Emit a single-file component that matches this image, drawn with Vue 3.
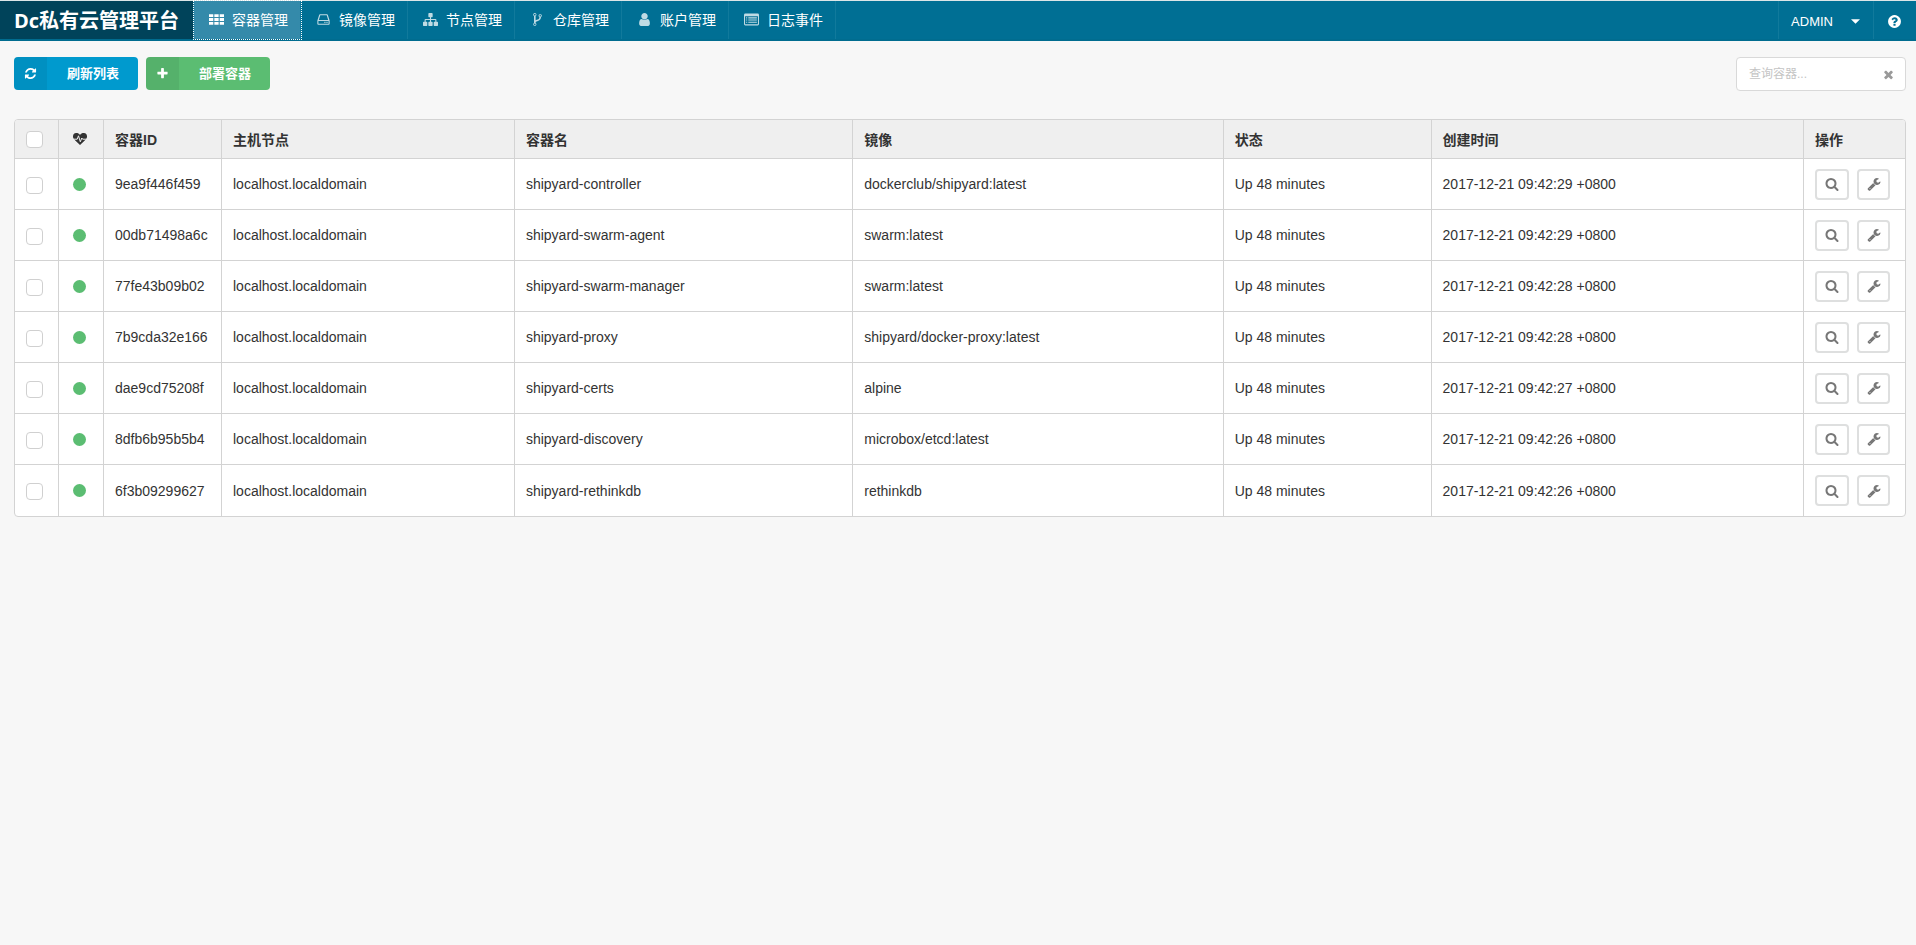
<script setup>
import { ref, computed } from 'vue'

const icons = {
  th: 'M0 256h512v352H0zM640 256h512v352H640zM1280 256h512v352H1280zM0 720h512v352H0zM640 720h512v352H640zM1280 720h512v352H1280zM0 1184h512v352H0zM640 1184h512v352H640zM1280 1184h512v352H1280z',
  disk: 'M480 256h832q70 0 96 70l200 640q24 60 24 110v340q0 120-110 120H270q-110 0-110-120v-340q0-50 24-110l200-640q26-70 96-70zM510 384L340 950h1112L1282 384zM288 1078v330h1216v-330zM1000 1160h130v160h-130zM1250 1160h130v160h-130z',
  sitemap: 'M1792 1248v320q0 40-28 68t-68 28h-320q-40 0-68-28t-28-68v-320q0-40 28-68t68-28h96v-192h-512v192h96q40 0 68 28t28 68v320q0 40-28 68t-68 28h-320q-40 0-68-28t-28-68v-320q0-40 28-68t68-28h96v-192h-512v192h96q40 0 68 28t28 68v320q0 40-28 68t-68 28h-320q-40 0-68-28t-28-68v-320q0-40 28-68t68-28h96v-192q0-52 38-90t90-38h512v-192h-96q-40 0-68-28t-28-68v-320q0-40 28-68t68-28h320q40 0 68 28t28 68v320q0 40-28 68t-68 28h-96v192h512q52 0 90 38t38 90v192h96q40 0 68 28t28 68z',
  fork: 'M672 1472q0-40-28-68t-68-28-68 28-28 68 28 68 68 28 68-28 28-68zm0-1152q0-40-28-68t-68-28-68 28-28 68 28 68 68 28 68-28 28-68zm640 128q0-40-28-68t-68-28-68 28-28 68 28 68 68 28 68-28 28-68zm96 0q0 52-26 96.5t-70 69.5q-2 287-226 414-67 38-203 81-128 40-169.5 71t-41.5 100v26q44 25 70 69.5t26 96.5q0 80-56 136t-136 56-136-56-56-136q0-52 26-96.5t70-69.5v-820q-44-25-70-69.5t-26-96.5q0-80 56-136t136-56 136 56 56 136q0 52-26 96.5t-70 69.5v497q54-26 154-57 55-17 87.5-29.5t70.5-31 59-39.5 40.5-51 28-69.5 8.5-91.5q-44-25-70-69.5t-26-96.5q0-80 56-136t136-56 136 56 56 136z',
  user: 'M1536 1399q0 109-62.5 187t-150.5 78h-854q-88 0-150.5-78t-62.5-187q0-85 8.5-160.5t31.5-152 58.5-131 94-89 134.5-34.5q131 128 313 128t313-128q76 0 134.5 34.5t94 89 58.5 131 31.5 152 8.5 160.5zm-256-887q0 159-112.5 271.5t-271.5 112.5-271.5-112.5-112.5-271.5 112.5-271.5 271.5-112.5 271.5 112.5 112.5 271.5z',
  list: 'M160 192h1472q160 0 160 160v1088q0 160-160 160H160Q0 1600 0 1440V352q0-160 160-160zM128 512v928q0 32 32 32h1472q32 0 32-32V512zM256 640h128v128H256zM512 640h1024v128H512zM256 896h128v128H256zM512 896h1024v128H512zM256 1152h128v128H256zM512 1152h1024v128H512z',
  refresh: 'M1639 1056q0 5-1 7-64 268-268 434.5t-478 166.5q-146 0-282.5-55t-243.5-157l-129 129q-19 19-45 19t-45-19-19-45v-448q0-26 19-45t45-19h448q26 0 45 19t19 45-19 45l-137 137q71 66 161 102t187 36q134 0 250-65t186-179q11-17 53-117 8-23 30-23h192q13 0 22.5 9.5t9.5 22.5zm25-800v448q0 26-19 45t-45 19h-448q-26 0-45-19t-19-45 19-45l138-138q-148-137-349-137-134 0-250 65t-186 179q-11 17-53 117-8 23-30 23h-199q-13 0-22.5-9.5t-9.5-22.5v-7q65-268 270-434.5t480-166.5q146 0 284 55.5t245 156.5l130-129q19-19 45-19t45 19 19 45z',
  plus: 'M1600 736v192q0 40-28 68t-68 28h-416v416q0 40-28 68t-68 28h-192q-40 0-68-28t-28-68v-416h-416q-40 0-68-28t-28-68v-192q0-40 28-68t68-28h416v-416q0-40 28-68t68-28h192q40 0 68 28t28 68v416h416q40 0 68 28t28 68z',
  search: 'M1216 832q0-185-131.5-316.5t-316.5-131.5-316.5 131.5-131.5 316.5 131.5 316.5 316.5 131.5 316.5-131.5 131.5-316.5zm512 832q0 52-38 90t-90 38q-54 0-90-38l-343-342q-179 124-399 124-143 0-273.5-55.5t-225-150-150-225-55.5-273.5 55.5-273.5 150-225 225-150 273.5-55.5 273.5 55.5 225 150 150 225 55.5 273.5q0 220-124 399l343 343q37 37 37 90z',
  wrench: 'M448 1472q0-26-19-45t-45-19-45 19-19 45 19 45 45 19 45-19 19-45zm644-420l-682 682q-37 37-90 37-52 0-91-37l-106-108q-38-36-38-90 0-53 38-91l681-681q39 98 114.5 173.5t173.5 114.5zm634-435q0 39-23 106-47 134-164.5 217.5t-258.5 83.5q-185 0-316.5-131.5t-131.5-316.5 131.5-316.5 316.5-131.5q58 0 121.5 16.5t107.5 46.5q16 11 16 28t-16 28l-293 169v224l193 107q5-3 79-48.5t135.5-81 70.5-35.5q15 0 23.5 10t8.5 25z',
  close: 'M1490 1322q0 40-28 68l-136 136q-28 28-68 28t-68-28l-294-294-294 294q-28 28-68 28t-68-28l-136-136q-28-28-28-68t28-68l294-294-294-294q-28-28-28-68t28-68l136-136q28-28 68-28t68 28l294 294 294-294q28-28 68-28t68 28l136 136q28 28 28 68t-28 68l-294 294 294 294q28 28 28 68z',
  help: 'M1024 1376v-192q0-14-9-23t-23-9h-192q-14 0-23 9t-9 23v192q0 14 9 23t23 9h192q14 0 23-9t9-23zm256-672q0-88-55.5-163t-138.5-116-170-41q-243 0-371 213-15 24 8 42l132 100q7 6 19 6 16 0 25-12 53-68 86-92 34-24 86-24 48 0 85.5 26t37.5 59q0 38-20 61t-68 45q-63 28-115.5 86.5t-52.5 125.5v36q0 14 9 23t23 9h192q14 0 23-9t9-23q0-19 21.5-49.5t54.5-49.5q32-18 49-28.5t46-35 44.5-48 28-60.5 12.5-81zm384 192q0 209-103 385.5t-279.5 279.5-385.5 103-385.5-103-279.5-279.5-103-385.5 103-385.5 279.5-279.5 385.5-103 385.5 103 279.5 279.5 103 385.5z'
}

const menu = [
  { label: '容器管理', icon: 'th' },
  { label: '镜像管理', icon: 'disk' },
  { label: '节点管理', icon: 'sitemap' },
  { label: '仓库管理', icon: 'fork' },
  { label: '账户管理', icon: 'user' },
  { label: '日志事件', icon: 'list' }
]
const current = ref('容器管理')

const node = 'localhost.localdomain'
const status = 'Up 48 minutes'
const containers = [
  { id: '9ea9f446f459', name: 'shipyard-controller', image: 'dockerclub/shipyard:latest', created: '2017-12-21 09:42:29 +0800' },
  { id: '00db71498a6c', name: 'shipyard-swarm-agent', image: 'swarm:latest', created: '2017-12-21 09:42:29 +0800' },
  { id: '77fe43b09b02', name: 'shipyard-swarm-manager', image: 'swarm:latest', created: '2017-12-21 09:42:28 +0800' },
  { id: '7b9cda32e166', name: 'shipyard-proxy', image: 'shipyard/docker-proxy:latest', created: '2017-12-21 09:42:28 +0800' },
  { id: 'dae9cd75208f', name: 'shipyard-certs', image: 'alpine', created: '2017-12-21 09:42:27 +0800' },
  { id: '8dfb6b95b5b4', name: 'shipyard-discovery', image: 'microbox/etcd:latest', created: '2017-12-21 09:42:26 +0800' },
  { id: '6f3b09299627', name: 'shipyard-rethinkdb', image: 'rethinkdb', created: '2017-12-21 09:42:26 +0800' }
]

const query = ref('')
const selected = ref([])
const shown = computed(() =>
  containers.filter((c) => (c.id + c.name + c.image).includes(query.value.trim()))
)
const allSelected = computed({
  get: () => selected.value.length === containers.length,
  set: (on) => { selected.value = on ? containers.map((c) => c.id) : [] }
})
</script>

<template>
  <div class="page">
    <nav class="bar" aria-label="主菜单">
      <h1 class="brand">Dc私有云管理平台</h1>
      <a
        v-for="item in menu"
        :key="item.label"
        href="#"
        class="item"
        :class="{ active: item.label === current }"
        @click.prevent="current = item.label"
      >
        <svg class="icon" viewBox="0 0 1792 1792" aria-hidden="true"><path :d="icons[item.icon]" fill-rule="evenodd" /></svg>
        <span>{{ item.label }}</span>
      </a>
      <div class="right">
        <button type="button" class="account">
          ADMIN
          <svg class="caret" viewBox="0 0 10 5" aria-hidden="true"><path d="M0 0h10L5 5z" /></svg>
        </button>
        <a href="#" class="help" aria-label="帮助">
          <svg viewBox="0 0 1792 1792" aria-hidden="true"><path :d="icons.help" /></svg>
        </a>
      </div>
    </nav>

    <main class="content">
      <div class="toolbar">
        <button type="button" class="action blue">
          <span class="badge"><svg viewBox="0 0 1792 1792" aria-hidden="true"><path :d="icons.refresh" /></svg></span>
          <span class="label">刷新列表</span>
        </button>
        <button type="button" class="action green">
          <span class="badge"><svg viewBox="0 0 1792 1792" aria-hidden="true"><path :d="icons.plus" /></svg></span>
          <span class="label">部署容器</span>
        </button>
        <div class="search">
          <input v-model="query" type="text" placeholder="查询容器..." aria-label="查询容器" />
          <button type="button" aria-label="清除" @click="query = ''">
            <svg viewBox="0 0 1792 1792" aria-hidden="true"><path :d="icons.close" /></svg>
          </button>
        </div>
      </div>

      <table class="grid">
        <colgroup>
          <col class="c-check" />
          <col class="c-health" />
          <col class="c-id" />
          <col class="c-node" />
          <col class="c-name" />
          <col class="c-image" />
          <col class="c-status" />
          <col />
          <col class="c-ops" />
        </colgroup>
        <thead>
          <tr>
            <th><input v-model="allSelected" type="checkbox" aria-label="全选" /></th>
            <th class="center">
              <svg class="heart" viewBox="0 0 14 12" role="img" aria-label="健康">
                <path d="M7 12L1.2 6.4C-.6 4.500-.3 1.700 1.300.6 3.200-.6 5.700-.2 7 2 8.300-.2 10.800-.6 12.700.6c1.600 1.100 1.900 3.900.1 5.800z" fill="#333" />
                <path d="M0 6.200h4.200l1.300-3.400L7.300 8.800 8.800 5l.8 1.200H14" fill="none" stroke="#efefef" stroke-width="1" />
              </svg>
            </th>
            <th>容器ID</th>
            <th>主机节点</th>
            <th>容器名</th>
            <th>镜像</th>
            <th>状态</th>
            <th>创建时间</th>
            <th>操作</th>
          </tr>
        </thead>
        <tbody>
          <tr v-for="c in shown" :key="c.id">
            <td><input v-model="selected" type="checkbox" :value="c.id" :aria-label="c.name" /></td>
            <td class="center"><span class="dot"></span></td>
            <td>{{ c.id }}</td>
            <td>{{ node }}</td>
            <td>{{ c.name }}</td>
            <td>{{ c.image }}</td>
            <td>{{ status }}</td>
            <td>{{ c.created }}</td>
            <td>
              <div class="ops">
                <button type="button" aria-label="查看"><svg viewBox="0 0 1792 1792" aria-hidden="true"><path :d="icons.search" /></svg></button>
                <button type="button" aria-label="设置"><svg viewBox="0 0 1792 1792" aria-hidden="true"><path :d="icons.wrench" /></svg></button>
              </div>
            </td>
          </tr>
        </tbody>
      </table>
    </main>
  </div>
</template>

<style>
body {
  background: #f7f7f7;
}
</style>

<style scoped>
.page {
  font-family: "Liberation Sans", Arial, "Noto Sans CJK SC", sans-serif;
  font-size: 14px;
  color: #333;
}

.page * {
  box-sizing: border-box;
}

svg {
  display: block;
  fill: currentColor;
}

button {
  font: inherit;
  color: inherit;
  border: 0;
  padding: 0;
  background: none;
  cursor: pointer;
}

.bar {
  display: flex;
  height: 41px;
  border-top: 1px solid #dce6e8;
  border-bottom: 2px solid #006c8f;
  background: #006f94;
  color: #fff;
}

.brand {
  margin: 0 1px 0 0;
  padding: 2px 14px 0 14px;
  background: #00435a;
  font: bold 20px/36px "Open Sans", "Noto Sans CJK SC", sans-serif;
  white-space: nowrap;
}

.item {
  display: flex;
  align-items: center;
  gap: 7px;
  padding: 0 12px 2px 14px;
  border-right: 1px solid #117a9c;
  color: #fff;
  text-decoration: none;
  white-space: nowrap;
}

.item .icon {
  width: 17px;
  height: 15px;
  opacity: 0.75;
}

.item.active {
  background: #348aaa;
  outline: 1px dotted #fff;
}

.item.active .icon {
  opacity: 1;
}

.right {
  display: flex;
  margin-left: auto;
}

.account {
  display: flex;
  align-items: center;
  gap: 18px;
  padding: 2px 13px 0 12px;
  border-left: 1px solid #117a9c;
  font-size: 13px;
}

.caret {
  width: 9px;
  height: 5px;
}

.help {
  display: flex;
  align-items: center;
  padding: 2px 14px 0 13px;
  border-left: 1px solid #117a9c;
  color: #fff;
}

.help svg {
  width: 15px;
  height: 15px;
}

.content {
  padding: 16px 10px 20px 14px;
}

.toolbar {
  display: flex;
  gap: 8px;
  margin-bottom: 29px;
}

.action {
  display: flex;
  align-items: stretch;
  height: 33px;
  border-radius: 4px;
  overflow: hidden;
  color: #fff;
  font-size: 13px;
  font-weight: bold;
}

.action .badge {
  display: grid;
  place-items: center;
  width: 33px;
  background: rgba(0, 0, 0, 0.06);
}

.action svg {
  width: 13px;
  height: 13px;
}

.action .label {
  padding: 0 19px 0 20px;
  line-height: 33px;
}

.blue {
  background: #009ace;
}

.green {
  background: #5bbd72;
}

.search {
  display: flex;
  align-items: center;
  width: 170px;
  height: 34px;
  margin-left: auto;
  margin-bottom: -1px;
  padding: 0 10px 0 12px;
  border: 1px solid #d9d9d9;
  border-radius: 4px;
  background: #fff;
}

.search input {
  flex: 1;
  min-width: 0;
  padding: 0;
  border: 0;
  outline: 0;
  font: inherit;
  font-size: 12px;
  color: #333;
}

.search input::placeholder {
  color: #c4c4c4;
}

.search svg {
  width: 13px;
  height: 13px;
  color: #999;
}

.grid {
  width: 100%;
  table-layout: fixed;
  border: 1px solid #d3d3d3;
  border-radius: 4px;
  border-collapse: separate;
  border-spacing: 0;
  background: #fff;
  overflow: hidden;
}

.c-check {
  width: 44px;
}

.c-health {
  width: 45px;
}

.c-id {
  width: 118px;
}

.c-node {
  width: 15.5%;
}

.c-name {
  width: 17.9%;
}

.c-image {
  width: 19.6%;
}

.c-status {
  width: 11%;
}

.c-ops {
  width: 101px;
}

th,
td {
  padding: 0 11px;
  border-right: 1px solid #d3d3d3;
  border-bottom: 1px solid #d3d3d3;
  text-align: left;
  white-space: nowrap;
}

th {
  height: 39px;
  background: #efefef;
}

td {
  height: 51px;
}

th:last-child,
td:last-child {
  border-right: 0;
}

tbody tr:last-child td {
  border-bottom: 0;
}

.center {
  padding: 0 3px 0 0;
  text-align: center;
}

.heart {
  width: 14px;
  height: 12px;
  margin: 0 auto;
}

.dot {
  display: block;
  width: 13px;
  height: 13px;
  margin: 0 auto;
  border-radius: 50%;
  background: #5bbd72;
}

input[type="checkbox"] {
  appearance: none;
  display: block;
  width: 17px;
  height: 17px;
  margin: 2px 0 0;
  border: 1px solid #d0d0d0;
  border-radius: 4px;
  background: #fff;
}

th input[type="checkbox"] {
  margin-top: 0;
}

input[type="checkbox"]:checked {
  background: #009ace;
}

.ops {
  display: flex;
  gap: 8px;
}

.ops button {
  display: grid;
  place-items: center;
  width: 34px;
  height: 31px;
  border: 2px solid #dedfdf;
  border-radius: 4px;
  color: #777;
}

.ops button + button {
  width: 33px;
}

.ops svg {
  width: 14px;
  height: 14px;
}
</style>
